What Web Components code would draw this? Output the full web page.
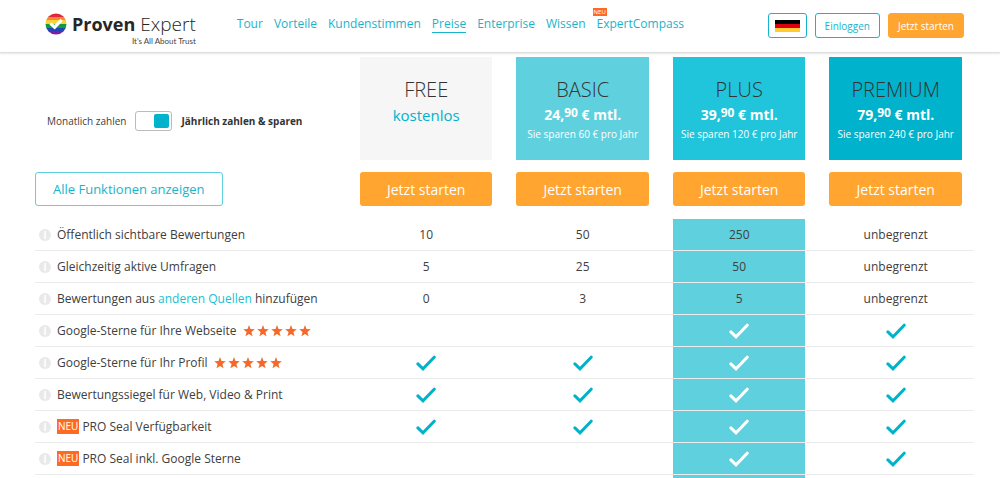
<!DOCTYPE html>
<html lang="de">
<head>
<meta charset="utf-8">
<title>ProvenExpert – Preise</title>
<style>
  :root {
    --teal: #00b2cb;
    --link: #18b4ca;
    --sky: #5fd0de;
    --orange: #ffa530;
    --flame: #ff6a21;
    --text: #404040;
  }
  body {
    margin: 0;
    background: #fff;
    color: var(--text);
    font-family: "Open Sans", "Noto Sans", sans-serif;
    font-size: 12px;
  }
</style>
</head>
<body>
<site-header></site-header>
<pricing-table></pricing-table>

<script>
const define = (name, html, setup) => {
  const template = document.createElement('template');
  template.innerHTML = html;
  customElements.define(name, class extends HTMLElement {
    constructor() {
      super();
      this.attachShadow({ mode: 'open' }).append(template.content.cloneNode(true));
    }
    connectedCallback() {
      if (setup) setup(this);
    }
  });
};

define('check-mark', `
<style>
  :host { display: inline-block; color: var(--teal); vertical-align: middle; }
  :host([light]) { color: #fff; }
  svg { display: block; }
</style>
<svg width="20" height="16" viewBox="0 0 20 16" role="img" aria-label="enthalten">
  <path d="M1.9 8.9 L7 13.8 L18.2 2.2" fill="none" stroke="currentColor" stroke-width="3" stroke-linecap="round" stroke-linejoin="miter"/>
</svg>`);

define('info-dot', `
<style>
  :host { display: block; flex: none; }
  svg { display: block; }
</style>
<svg width="12" height="12" viewBox="0 0 12 12" role="img" aria-label="Info">
  <circle cx="6" cy="6" r="6" fill="#e9e9e9"/>
  <rect x="5.3" y="2" width="1.5" height="8" fill="#fff"/>
</svg>`);

define('star-rating', `
<style>
  :host { display: block; }
  svg { display: block; }
</style>
<svg width="68" height="12" viewBox="0 0 68 12" role="img" aria-label="5 Sterne">
  <defs><path id="s" fill="#f4692a" d="M6 0 L7.5 4.1 L11.8 4.3 L8.4 7 L9.6 11.3 L6 8.9 L2.4 11.3 L3.6 7 L0.2 4.3 L4.5 4.1 Z"/></defs>
  <use href="#s"/><use href="#s" x="14"/><use href="#s" x="28"/><use href="#s" x="42"/><use href="#s" x="56"/>
</svg>`);

define('new-badge', `
<style>
  :host { display: block; background: var(--flame); color: #fff; font-size: 10px; line-height: 15px; padding: 0 1px; margin-right: -3px; }
  :host([small]) { font-size: 6px; line-height: 8px; margin: 0; }
</style>
<slot>NEU</slot>`);

define('brand-logo', `
<style>
  :host { display: block; }
  a { display: grid; grid-template-columns: 22px auto; column-gap: 5px; color: #262626; text-decoration: none; }
  svg { display: block; }
  .name { font-size: 19px; line-height: 22px; white-space: nowrap; }
  strong { font-size: 18px; font-weight: 700; }
  .light { font-weight: 300; margin-left: 5px; }
  small { grid-column: 2; justify-self: end; font: 8px/12px Lato, sans-serif; color: #444; }
</style>
<a href="#">
  <svg width="22" height="22" viewBox="0 0 22 22" aria-hidden="true">
    <defs><clipPath id="c"><circle cx="11" cy="11" r="10.5"/></clipPath></defs>
    <g clip-path="url(#c)">
      <rect width="22" height="5" fill="#e2263c"/>
      <rect y="4" width="22" height="4" fill="#f58a2c"/>
      <rect y="7" width="22" height="4" fill="#f7d23c"/>
      <rect y="11" width="22" height="4" fill="#139a3e"/>
      <rect y="15" width="22" height="3" fill="#2446b5"/>
      <rect y="18" width="22" height="4" fill="#7a1fa0"/>
    </g>
    <path d="M5.4 10.4 L9.6 14.2 L16.6 6.8" fill="none" stroke="#fff" stroke-width="3.2"/>
  </svg>
  <span class="name"><strong>Proven</strong><span class="light">Expert</span></span>
  <small>It's All About Trust</small>
</a>`);

define('nav-link', `
<style>
  :host { display: block; position: relative; }
  a { display: block; color: var(--link); text-decoration: none; line-height: 17px; border-bottom: 1px solid transparent; }
  :host([current]) a { border-color: var(--link); }
  ::slotted([slot=badge]) { position: absolute; left: -4px; top: -7px; }
</style>
<a href="#"><slot></slot></a><slot name="badge"></slot>`);

define('site-header', `
<style>
  :host { display: block; background: #fff; border-bottom: 1px solid #dedede; box-shadow: 0 1px 2px #0000001a; }
  header { display: flex; align-items: flex-start; padding: 13px 36px 5px 45px; }
  nav { display: flex; gap: 11px; margin: 2px 0 0 41px; }
  .actions { display: flex; gap: 8px; margin-left: auto; }
  button { font: inherit; font-size: 10px; height: 25px; padding: 0 9px; border: 1px solid var(--link); border-radius: 3px; background: #fff; color: var(--link); }
  .flag { padding: 0 6px; }
  .flag svg { display: block; }
  .start { border-color: var(--orange); background: var(--orange); color: #fff; }
</style>
<header>
  <brand-logo></brand-logo>
  <nav>
    <nav-link>Tour</nav-link>
    <nav-link>Vorteile</nav-link>
    <nav-link>Kundenstimmen</nav-link>
    <nav-link current>Preise</nav-link>
    <nav-link>Enterprise</nav-link>
    <nav-link>Wissen</nav-link>
    <nav-link>ExpertCompass<new-badge slot="badge" small>NEU</new-badge></nav-link>
  </nav>
  <div class="actions">
    <button class="flag" type="button" aria-label="Deutsch"><svg width="25" height="12" viewBox="0 0 25 12"><rect width="25" height="4"/><rect y="4" width="25" height="4" fill="#dd0012"/><rect y="8" width="25" height="4" fill="#fc3"/></svg></button>
    <button type="button">Einloggen</button>
    <button class="start" type="button">Jetzt starten</button>
  </div>
</header>`);

define('billing-switch', `
<style>
  :host { display: block; }
  label { display: flex; align-items: center; gap: 9px; padding-left: 12px; font-size: 10px; line-height: 20px; white-space: nowrap; }
  input { appearance: none; display: flex; justify-content: flex-end; box-sizing: border-box; width: 37px; height: 20px; margin: 0; padding: 2px; border: 1px solid #bbb; border-radius: 3px; background: #fff; }
  input::before { content: ""; width: 15px; height: 14px; border-radius: 2px; background: var(--teal); }
  input:not(:checked) { justify-content: flex-start; }
  strong { color: #333; }
</style>
<label><span>Monatlich zahlen</span><input type="checkbox" role="switch" checked><strong>Jährlich zahlen &amp; sparen</strong></label>`);

define('plan-card', `
<style>
  :host { display: block; box-sizing: border-box; height: 103px; padding-top: 19px; text-align: center; background: var(--card); color: #fff; white-space: nowrap; }
  h2 { margin: 0; font-size: 20px; line-height: 27px; font-weight: 300; color: #333; }
  p { margin: 0; font-size: 14px; line-height: 24px; font-weight: 700; }
  small { display: block; font-size: 10px; line-height: 14px; font-weight: 400; }
  :host([free]) p { color: var(--teal); font-size: 15px; font-weight: 400; }
</style>
<h2><slot name="name"></slot></h2>
<p><slot></slot></p>
<small><slot name="saving"></slot></small>`);

define('start-button', `
<style>
  :host { display: block; }
  button { display: block; width: 100%; height: 34px; border: 0; border-radius: 3px; background: var(--orange); color: #fff; font: inherit; font-size: 14px; font-weight: 400; }
</style>
<button type="button">Jetzt starten</button>`);

define('pricing-table', `
<style>
  :host { display: block; padding: 4px 26px 0 35px; }
  table { width: 100%; border-collapse: collapse; table-layout: fixed; }
  col.label { width: 33.33%; }
  th, td { padding: 0 12px; font-weight: 400; text-align: center; }
  thead th:first-child, thead td:first-child { padding: 0; text-align: left; }
  .cards > * { padding-bottom: 12px; }
  .cards > :first-child { padding-top: 13px; }
  .starts > *, .starts > :first-child { padding-bottom: 13px; }
  .all { display: block; height: 34px; padding: 0 17px; border: 1px solid var(--sky); border-radius: 3px; background: #fff; color: var(--link); font: inherit; font-size: 13px; }
  sup { font-size: 12px; line-height: 0; vertical-align: 3px; }
  tbody tr { border-bottom: 1px solid #ececec; }
  tbody th, tbody td { height: 31px; line-height: 31px; }
  tbody th { padding: 0 0 0 4px; white-space: nowrap; }
  .feature { display: flex; align-items: center; gap: 6px; }
  .feature a { color: #18bfd0; text-decoration: none; }
  .cell { display: flex; align-items: center; justify-content: center; height: 31px; }
  .plus { background: var(--sky); }
  tfoot td { height: 3px; }
  tfoot .cell { height: 3px; }
  .free { --card: #f6f6f6; } .basic { --card: #5fd0de; } .mid { --card: #20c5db; } .premium { --card: #00b2cb; }
</style>
<table>
  <colgroup><col class="label"><col><col><col><col></colgroup>
  <thead>
    <tr class="cards">
      <td><billing-switch></billing-switch></td>
      <th scope="col"><plan-card free class="free"><span slot="name">FREE</span>kostenlos</plan-card></th>
      <th scope="col"><plan-card class="basic"><span slot="name">BASIC</span>24,<sup>90</sup> € mtl.<span slot="saving">Sie sparen 60 € pro Jahr</span></plan-card></th>
      <th scope="col"><plan-card class="mid"><span slot="name">PLUS</span>39,<sup>90</sup> € mtl.<span slot="saving">Sie sparen 120 € pro Jahr</span></plan-card></th>
      <th scope="col"><plan-card class="premium"><span slot="name">PREMIUM</span>79,<sup>90</sup> € mtl.<span slot="saving">Sie sparen 240 € pro Jahr</span></plan-card></th>
    </tr>
    <tr class="starts">
      <td><button class="all" type="button">Alle Funktionen anzeigen</button></td>
      <td><start-button></start-button></td>
      <td><start-button></start-button></td>
      <td><start-button></start-button></td>
      <td><start-button></start-button></td>
    </tr>
  </thead>
  <tbody></tbody>
  <tfoot><tr><td colspan="3"></td><td><div class="cell plus"></div></td><td></td></tr></tfoot>
</table>`, host => {
  const yes = '<check-mark></check-mark>';
  const rows = [
    ['<span>Öffentlich sichtbare Bewertungen</span>', '10', '50', '250', 'unbegrenzt'],
    ['<span>Gleichzeitig aktive Umfragen</span>', '5', '25', '50', 'unbegrenzt'],
    ['<span>Bewertungen aus <a href="#">anderen Quellen</a> hinzufügen</span>', '0', '3', '5', 'unbegrenzt'],
    ['<span>Google-Sterne für Ihre Webseite</span><star-rating></star-rating>', '', '', yes, yes],
    ['<span>Google-Sterne für Ihr Profil</span><star-rating></star-rating>', yes, yes, yes, yes],
    ['<span>Bewertungssiegel für Web, Video &amp; Print</span>', yes, yes, yes, yes],
    ['<new-badge>NEU</new-badge><span>PRO Seal Verfügbarkeit</span>', yes, yes, yes, yes],
    ['<new-badge>NEU</new-badge><span>PRO Seal inkl. Google Sterne</span>', '', '', yes, yes]
  ];
  host.shadowRoot.querySelector('tbody').innerHTML = rows.map(([label, ...cells]) => `<tr>
    <th scope="row"><div class="feature"><info-dot></info-dot>${label}</div></th>
    ${cells.map((cell, i) => `<td><div class="cell${i === 2 ? ' plus' : ''}">${i === 2 ? cell.replace('<check-mark', '<check-mark light') : cell}</div></td>`).join('')}
  </tr>`).join('');
});
</script>
</body>
</html>
